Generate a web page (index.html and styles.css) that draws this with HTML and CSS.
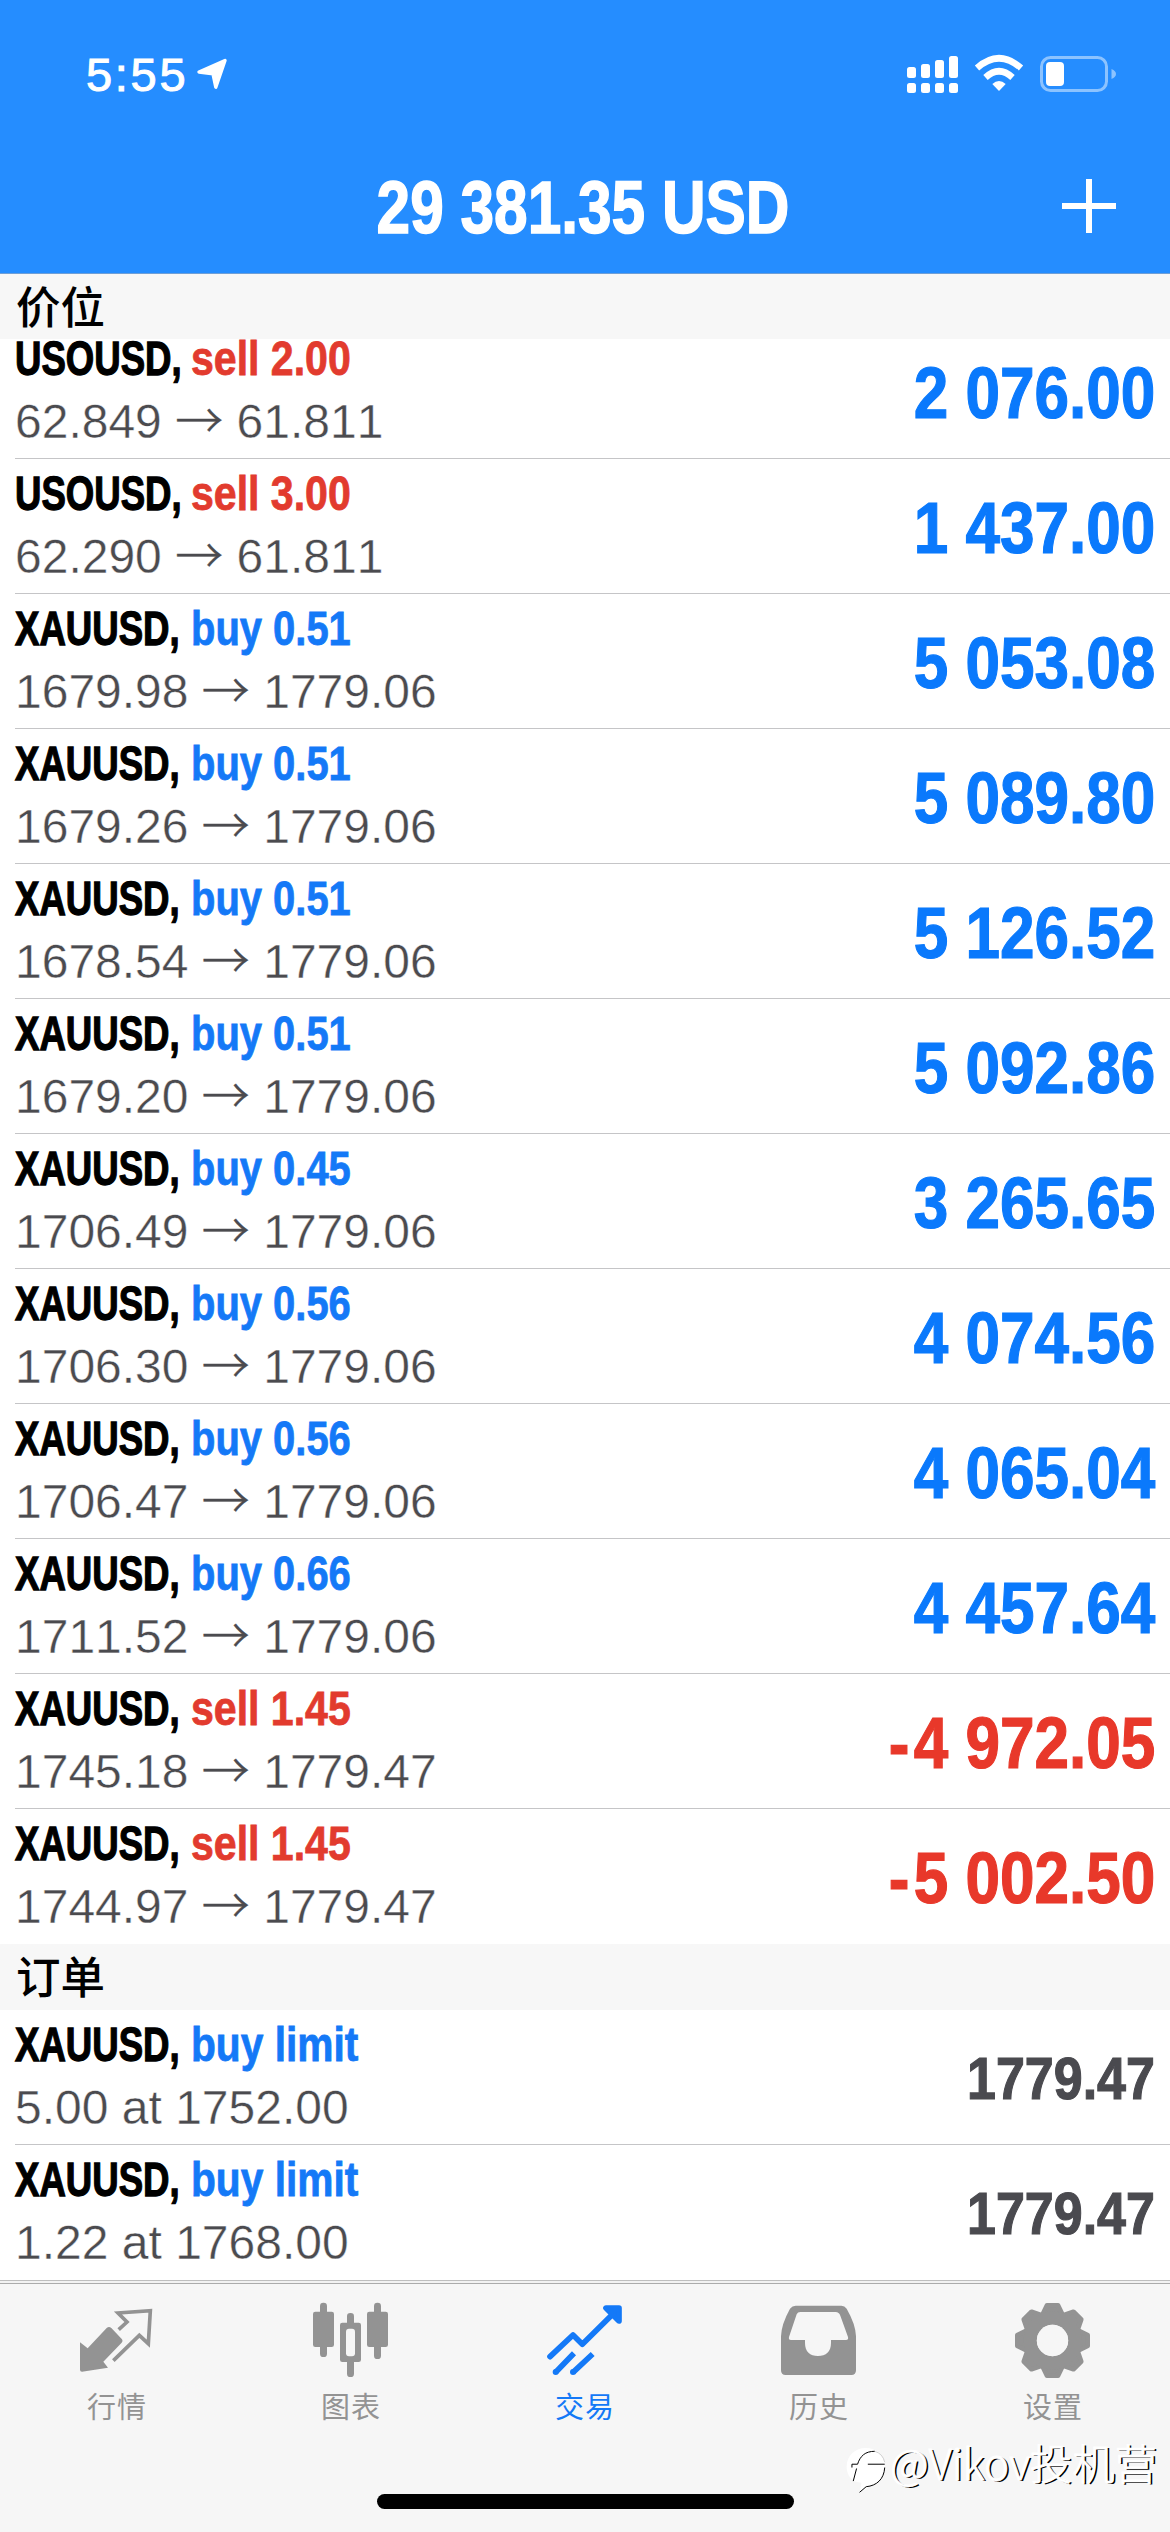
FILE: index.html
```html
<!DOCTYPE html>
<html lang="zh-CN">
<head>
<meta charset="utf-8">
<title>交易</title>
<link rel="stylesheet" href="styles.css">
</head>
<body>
<div class="screen">
  <header class="header">
    <div class="status">
      <div class="status-left">
        <span class="time">5:55</span>
        <svg class="location" viewBox="0 0 32 32"><path d="M29 2.500L19.800 29.200L17 15.800L3 14Z" fill="#fff" stroke="#fff" stroke-width="3.400" stroke-linejoin="round"/></svg>
      </div>
      <svg class="indicators" viewBox="905 50 214 48">
        <g fill="#fff">
          <rect x="907" y="67" width="9" height="11" rx="2.500"/><rect x="921" y="64" width="9" height="14" rx="2.500"/><rect x="935" y="60" width="9" height="18" rx="2.500"/><rect x="949" y="56" width="9" height="22" rx="2.500"/>
          <rect x="907" y="83" width="9" height="10" rx="2.500"/><rect x="921" y="83" width="9" height="10" rx="2.500"/><rect x="935" y="83" width="9" height="10" rx="2.500"/><rect x="949" y="83" width="9" height="10" rx="2.500"/>
          <path d="M999 91L992.300 84Q999 78 1005.700 84Z"/>
          <rect x="1046" y="62" width="18" height="24" rx="4"/>
        </g>
        <g fill="none" stroke="#fff" stroke-width="6.500">
          <path d="M977 68Q999 48.500 1021 68"/><path d="M985.500 77.500Q999 65 1012.500 77.500"/>
        </g>
        <rect x="1041.500" y="57.500" width="65" height="33" rx="9" fill="none" stroke="#8cc3ff" stroke-width="3"/>
        <path d="M1111.500 69Q1116 71 1116 74Q1116 77 1111.500 79Z" fill="#8cc3ff"/>
      </svg>
    </div>
    <div class="nav">
      <h1 class="balance">29 381.35 USD</h1>
      <svg class="add" viewBox="0 0 54 54"><path d="M27 0V54M0 27H54" stroke="#fff" stroke-width="6"/></svg>
    </div>
  </header>

  <main class="content">
    <h2 class="section section-first">价位</h2>
    <ul class="list list-positions">
      <li class="row"><div class="info"><div class="name"><span class="symbol">USOUSD,</span><span class="action sell">sell 2.00</span></div><div class="price">62.849 <span class="arrow">→</span> 61.811</div></div><span class="amount">2 076.00</span></li>
      <li class="row"><div class="info"><div class="name"><span class="symbol">USOUSD,</span><span class="action sell">sell 3.00</span></div><div class="price">62.290 <span class="arrow">→</span> 61.811</div></div><span class="amount">1 437.00</span></li>
      <li class="row"><div class="info"><div class="name"><span class="symbol">XAUUSD,</span><span class="action buy">buy 0.51</span></div><div class="price">1679.98 <span class="arrow">→</span> 1779.06</div></div><span class="amount">5 053.08</span></li>
      <li class="row"><div class="info"><div class="name"><span class="symbol">XAUUSD,</span><span class="action buy">buy 0.51</span></div><div class="price">1679.26 <span class="arrow">→</span> 1779.06</div></div><span class="amount">5 089.80</span></li>
      <li class="row"><div class="info"><div class="name"><span class="symbol">XAUUSD,</span><span class="action buy">buy 0.51</span></div><div class="price">1678.54 <span class="arrow">→</span> 1779.06</div></div><span class="amount">5 126.52</span></li>
      <li class="row"><div class="info"><div class="name"><span class="symbol">XAUUSD,</span><span class="action buy">buy 0.51</span></div><div class="price">1679.20 <span class="arrow">→</span> 1779.06</div></div><span class="amount">5 092.86</span></li>
      <li class="row"><div class="info"><div class="name"><span class="symbol">XAUUSD,</span><span class="action buy">buy 0.45</span></div><div class="price">1706.49 <span class="arrow">→</span> 1779.06</div></div><span class="amount">3 265.65</span></li>
      <li class="row"><div class="info"><div class="name"><span class="symbol">XAUUSD,</span><span class="action buy">buy 0.56</span></div><div class="price">1706.30 <span class="arrow">→</span> 1779.06</div></div><span class="amount">4 074.56</span></li>
      <li class="row"><div class="info"><div class="name"><span class="symbol">XAUUSD,</span><span class="action buy">buy 0.56</span></div><div class="price">1706.47 <span class="arrow">→</span> 1779.06</div></div><span class="amount">4 065.04</span></li>
      <li class="row"><div class="info"><div class="name"><span class="symbol">XAUUSD,</span><span class="action buy">buy 0.66</span></div><div class="price">1711.52 <span class="arrow">→</span> 1779.06</div></div><span class="amount">4 457.64</span></li>
      <li class="row"><div class="info"><div class="name"><span class="symbol">XAUUSD,</span><span class="action sell">sell 1.45</span></div><div class="price">1745.18 <span class="arrow">→</span> 1779.47</div></div><span class="amount loss"><span class="minus">-</span>4 972.05</span></li>
      <li class="row"><div class="info"><div class="name"><span class="symbol">XAUUSD,</span><span class="action sell">sell 1.45</span></div><div class="price">1744.97 <span class="arrow">→</span> 1779.47</div></div><span class="amount loss"><span class="minus">-</span>5 002.50</span></li>
    </ul>
    <h2 class="section">订单</h2>
    <ul class="list">
      <li class="row"><div class="info"><div class="name"><span class="symbol">XAUUSD,</span><span class="action buy limit">buy limit</span></div><div class="price">5.00 at 1752.00</div></div><span class="quote">1779.47</span></li>
      <li class="row"><div class="info"><div class="name"><span class="symbol">XAUUSD,</span><span class="action buy limit">buy limit</span></div><div class="price">1.22 at 1768.00</div></div><span class="quote">1779.47</span></li>
    </ul>
  </main>

  <footer class="footer">
    <nav class="tabs">
      <a class="tab">
        <svg class="tab-icon" viewBox="105 84 252 252"><path d="M120 214L143 232L200 171Q207 165 214 171L246 205Q250 210 245 215L190 272L204 290L126 302Q120 302 120 296Z" fill="#939393"/><path d="M236 176L261 153L234 126L331 119L325 218L298 193L220 269" fill="none" stroke="#939393" stroke-width="11"/></svg>
        <span>行情</span>
      </a>
      <a class="tab">
        <svg class="tab-icon" viewBox="807 84 252 252"><g fill="#939393"><rect x="819" y="122" width="63" height="106" rx="7"/><rect x="840" y="95" width="21" height="163" rx="10"/><rect x="981" y="122" width="63" height="106" rx="7"/><rect x="1002" y="95" width="21" height="169" rx="10"/><rect x="900" y="155" width="63" height="118" rx="7"/><rect x="921" y="126" width="21" height="192" rx="10"/></g><rect x="918" y="173" width="27" height="83" rx="9" fill="#f6f6f6"/></svg>
        <span>图表</span>
      </a>
      <a class="tab tab-active">
        <svg class="tab-icon" viewBox="129 84 252 252"><g fill="none" stroke="#1479f7" stroke-width="17" stroke-linecap="round" stroke-linejoin="round"><path d="M150 257L219 192L247 220L350 118"/><path d="M318 111H357V150Z" fill="#1479f7"/></g><path d="M167 304L222 247M219 304L278 249" fill="none" stroke="#1479f7" stroke-width="17"/><circle cx="167" cy="303" r="9" fill="#1479f7"/><circle cx="219" cy="303" r="9" fill="#1479f7"/></svg>
        <span>交易</span>
      </a>
      <a class="tab">
        <svg class="tab-icon" viewBox="831 84 252 252"><path fill="#939393" fill-rule="evenodd" d="M887 104H1024Q1034 104 1040 113Q1067 160 1068 196V298Q1068 312 1054 312H857Q843 312 843 298V196Q844 160 870 113Q877 104 887 104ZM901 123Q893 123 890 130L867 198Q865 207 873 207H915V216C915 242 930 255 954 255S993 242 993 216V207H1038Q1046 207 1044 198L1021 134Q1017 123 1007 123Z"/></svg>
        <span>历史</span>
      </a>
      <a class="tab">
        <svg class="tab-icon" viewBox="573 84 252 252">
          <defs><path id="tooth" d="M664 138L681 103H714L731 138Z" stroke="#939393" stroke-width="14" stroke-linejoin="round"/></defs>
          <g fill="#939393"><use href="#tooth"/><use href="#tooth" transform="rotate(45 697.500 208.500)"/><use href="#tooth" transform="rotate(90 697.500 208.500)"/><use href="#tooth" transform="rotate(135 697.500 208.500)"/><use href="#tooth" transform="rotate(180 697.500 208.500)"/><use href="#tooth" transform="rotate(225 697.500 208.500)"/><use href="#tooth" transform="rotate(270 697.500 208.500)"/><use href="#tooth" transform="rotate(315 697.500 208.500)"/></g>
          <circle cx="697.500" cy="208.500" r="67" fill="none" stroke="#939393" stroke-width="40"/><circle cx="697.500" cy="208.500" r="47" fill="#f6f6f6"/>
        </svg>
        <span>设置</span>
      </a>
    </nav>
    <div class="home-indicator"></div>
    <div class="watermark">
      <svg class="watermark-logo" viewBox="80 525 125 145"><path d="M138 531C170 531 197 552 197 588C197 618 178 640 148 648L120 668L126 636C98 636 81 615 81 588C81 553 108 531 138 531Z" fill="#fff"/><path d="M97 590V580H114C122 555 137 541 166 541M145 580H196M196 590C194 625 172 645 140 648L120 665M111 593L101 631" fill="none" stroke="#000" stroke-width="3"/><path d="M166 541Q190 548 196 574" fill="none" stroke="#bbb" stroke-width="2"/></svg>
      <span class="watermark-text">@Vikov投机营</span>
    </div>
  </footer>
</div>
</body>
</html>
```

FILE: styles.css
```css
* { box-sizing: border-box; }
body { margin: 0; background: #fff; font-family: "Liberation Sans", "Noto Sans CJK SC", sans-serif; font-kerning: none; }
h1, h2, ul { margin: 0; padding: 0; list-style: none; }
svg { display: block; }

.screen { width: 1170px; height: 2532px; display: flex; flex-direction: column; overflow: hidden; }

/* Header */
.header { height: 274px; flex: none; background: #258dff; color: #fff; border-bottom: 1px solid #6f9fd6; }
.status { height: 139px; display: flex; justify-content: space-between; align-items: flex-start; padding: 50px 51px 0 86px; }
.status-left { display: flex; align-items: flex-start; }
.time { font-size: 47px; line-height: 48px; letter-spacing: 2.700px; -webkit-text-stroke: 1px #fff; width: 110px; margin-top: 1px; }
.location { width: 32px; height: 32px; margin-top: 8px; }
.indicators { width: 214px; height: 48px; }
.nav { height: 134px; display: grid; grid-template-columns: 1fr auto 1fr; align-items: center; padding-right: 54px; }
.balance { grid-column: 2; font-size: 74px; line-height: 74px; font-weight: 700; white-space: nowrap; padding-top: 4px; transform: translateX(25px) scaleX(.816); -webkit-text-stroke: 1.500px #fff; }
.add { grid-column: 3; justify-self: end; width: 54px; height: 54px; }

/* Lists */
.content { height: 2006px; flex: none; }
.section { height: 66px; padding-left: 16px; background: #f7f7f7; color: #000; font: 500 44.500px/61px "Noto Sans CJK SC", sans-serif; }
.section-first { height: 65px; position: relative; z-index: 1; }
.list-positions { margin-top: -15px; }
.row { height: 135px; margin-left: 15px; padding-right: 15px; display: flex; justify-content: space-between; align-items: center; border-bottom: 1px solid #c5c5c7; }
.row:last-child { border-bottom-color: transparent; }
.info { align-self: flex-start; padding: 11px 0 0 1px; display: flex; flex-direction: column; gap: 15px; }
.name { display: flex; font-size: 48px; line-height: 48px; font-weight: 700; white-space: nowrap; }
.symbol { width: 175px; color: #000; transform: translateX(-1px) scaleX(.762); transform-origin: left; -webkit-text-stroke: 1.300px #000; }
.symbol, .action { display: block; }
.action { transform-origin: left; -webkit-text-stroke: .8px currentColor; }
.sell { color: #e23b2e; transform: scaleX(.855); }
.buy { color: #1479f7; transform: scaleX(.832); }
.limit { transform: scaleX(.848); }
.price { height: 48px; font-size: 48px; line-height: 48px; color: #4b4b4f; white-space: nowrap; -webkit-text-stroke: .4px #fff; transform: translateX(-1px); }
.arrow { font-family: "Noto Sans CJK SC", sans-serif; font-weight: 300; line-height: 0; -webkit-text-stroke: .4px currentColor; }
.amount, .quote { font-weight: 700; white-space: nowrap; transform-origin: right; -webkit-text-stroke: 1.200px currentColor; }
.amount { padding-top: 3px; font-size: 72px; line-height: 72px; color: #0a79fc; transform: scaleX(.862); }
.loss { color: #e8382a; }
.minus { margin-right: 5px; }
.quote { padding-top: 4px; font-size: 60px; line-height: 60px; color: #4a4a4f; transform: scaleX(.866); }

/* Tab bar */
.footer { position: relative; height: 252px; flex: none; background: #f6f6f6; border-top: 1px solid #bebebe; }
.footer::before { content: ""; display: block; height: 2px; background: #f2f2f2; border-bottom: 1px solid #ababab; }
.tabs { height: 210px; display: grid; grid-template-columns: repeat(5, 1fr); padding-top: 15px; }
.tab { display: flex; flex-direction: column; align-items: center; gap: 2px; color: #939393; font: 400 29px/40px "Noto Sans CJK SC", sans-serif; letter-spacing: 1px; }
.tab-active { color: #1479f7; }
.tab-icon { width: 84px; height: 84px; }
.home-indicator { width: 417px; height: 15px; margin: 0 auto; border-radius: 8px; background: #000; }
.watermark { position: absolute; left: 846px; top: 160px; display: flex; align-items: flex-start; }
.watermark-logo { width: 42px; height: 48px; margin-top: 5px; }
.watermark-text { margin-left: 2px; color: #fff; font: 300 42.300px/48px "Noto Sans CJK SC", sans-serif; white-space: nowrap; -webkit-text-stroke: .8px #fff; text-shadow: 2px .5px 0 #000; transform: translateY(-3px); }
```
